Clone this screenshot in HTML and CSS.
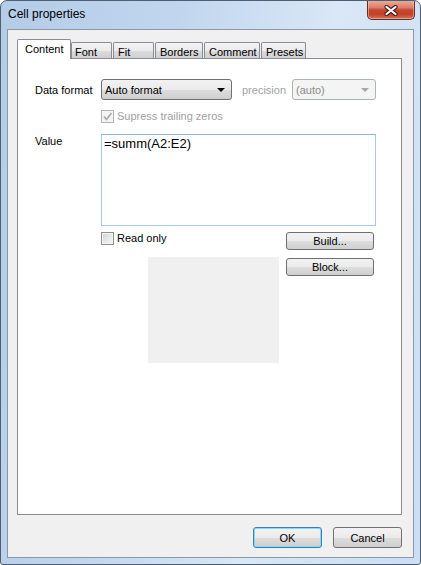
FILE: index.html
```html
<!DOCTYPE html>
<html>
<head>
<meta charset="utf-8">
<title>Cell properties</title>
<link rel="stylesheet" href="styles.css">
</head>
<body>
<div class="window">
  <div class="titlebar">
    <span class="title">Cell properties</span>
    <div class="close">
      <svg width="14" height="11" viewBox="0 0 14 11">
        <path d="M2.5 2 L11.5 9 M11.5 2 L2.5 9" stroke="#4a1c14" stroke-width="4.2" stroke-linecap="round" fill="none"/>
        <path d="M2.5 2 L11.5 9 M11.5 2 L2.5 9" stroke="#ffffff" stroke-width="2.2" stroke-linecap="round" fill="none"/>
      </svg>
    </div>
  </div>
  <div class="client">
    <div class="tabs">
      <div class="tab active w-content">Content</div>
      <div class="tab w-font">Font</div>
      <div class="tab w-fit">Fit</div>
      <div class="tab w-borders">Borders</div>
      <div class="tab w-comment">Comment</div>
      <div class="tab w-presets">Presets</div>
    </div>
    <div class="panel">
      <div class="row r1">
        <span class="lbl">Data format</span>
        <div class="combo">
          <span>Auto format</span>
          <span class="arrow"></span>
        </div>
        <span class="prec">precision</span>
        <div class="combo dis">
          <span>(auto)</span>
          <span class="arrow"></span>
        </div>
      </div>
      <div class="row r2">
        <span class="chk chk-dis">
          <svg width="11" height="11" viewBox="0 0 11 11"><path d="M2 5.5 L4.5 8.5 L9.5 2" stroke="#a9a9a9" stroke-width="1.6" fill="none"/></svg>
        </span>
        <span class="chklbl dimtext">Supress trailing zeros</span>
      </div>
      <div class="row r3">
        <span class="lbl vlbl">Value</span>
        <div class="textbox">=summ(A2:E2)</div>
      </div>
      <div class="row r4">
        <span class="chk"></span>
        <span class="chklbl">Read only</span>
        <div class="btn small">Build...</div>
      </div>
      <div class="row r5">
        <div class="preview"></div>
        <div class="btn small block">Block...</div>
      </div>
    </div>
    <div class="actions">
      <div class="btn big default">OK</div>
      <div class="btn big">Cancel</div>
    </div>
  </div>
</div>
</body>
</html>
```
FILE: styles.css
```css
html, body {
  margin: 0;
  padding: 0;
  background: #ffffff;
}
body {
  font-family: "Liberation Sans", Arial, sans-serif;
  font-size: 11px;
  color: #000;
}
.window {
  width: 421px;
  height: 565px;
  box-sizing: border-box;
  border: 1px solid #4f5f72;
  border-radius: 7px 7px 3px 3px;
  background: linear-gradient(100deg, #b4cce8 0%, #c1d6ee 35%, #d9e7f6 65%, #cbdef2 100%);
  display: flex;
  flex-direction: column;
  overflow: hidden;
}
.titlebar {
  height: 28px;
  flex: none;
  display: flex;
  justify-content: space-between;
  align-items: flex-start;
  padding-left: 7px;
}
.title {
  font-size: 12px;
  line-height: 16px;
  padding-top: 5px;
  color: #000;
}
.close {
  width: 48px;
  height: 20px;
  margin-top: -1px;
  margin-right: 5px;
  box-sizing: border-box;
  border: 1px solid #6b2a20;
  border-top: none;
  border-radius: 0 0 5px 5px;
  background: linear-gradient(#eab2a3 0%, #dc7c69 40%, #c74530 52%, #c0412c 75%, #d4765c 100%);
  box-shadow: inset 0 0 0 1px rgba(255, 220, 210, 0.45);
  display: flex;
  align-items: center;
  justify-content: center;
  padding-top: 1px;
}
.client {
  margin: 0 6px;
  height: 529px;
  box-sizing: border-box;
  border: 1px solid #8d98a5;
  background: #f0f0f0;
  display: flex;
  flex-direction: column;
}
.tabs {
  display: flex;
  align-items: flex-end;
  margin: 9px 0 -1px 9px;
  position: relative;
  z-index: 1;
}
.tab {
  box-sizing: border-box;
  height: 16px;
  margin-bottom: 1px;
  margin-left: 1px;
  border: 1px solid #898c95;
  border-bottom: none;
  border-radius: 2px 2px 0 0;
  padding: 3px 0 0 4px;
  line-height: 13px;
  white-space: nowrap;
  background: linear-gradient(#f3f3f3 0%, #ebebeb 50%, #dddddd 51%, #cfcfcf 100%);
}
.tab.active {
  height: 20px;
  margin-bottom: 0;
  margin-left: 0;
  background: #ffffff;
  padding-left: 7px;
}
.w-content { width: 54px; }
.w-font { width: 41px; margin-left: 0; padding-left: 3px; }
.w-fit { width: 41px; }
.w-borders { width: 48px; }
.w-comment { width: 56px; }
.w-presets { width: 45px; }

.panel {
  margin: 0 11px 0 9px;
  height: 457px;
  flex: none;
  box-sizing: border-box;
  border: 1px solid #898c95;
  background: #ffffff;
  padding: 20px 27px 0 17px;
}
.row {
  display: flex;
}
.r1 {
  align-items: center;
  height: 21px;
}
.lbl {
  width: 66px;
  flex: none;
}
.combo {
  width: 131px;
  height: 21px;
  flex: none;
  box-sizing: border-box;
  border: 1px solid #707070;
  border-radius: 3px;
  background: linear-gradient(#f2f2f2 0%, #ebebeb 50%, #dddddd 51%, #cfcfcf 100%);
  display: flex;
  align-items: center;
  justify-content: space-between;
  padding: 0 6px 0 3px;
}
.arrow {
  width: 0;
  height: 0;
  border-left: 4px solid transparent;
  border-right: 4px solid transparent;
  border-top: 4px solid #000;
}
.prec {
  margin-left: 10px;
  width: 50px;
  flex: none;
  color: #a0a0a0;
}
.combo.dis {
  width: 84px;
  border-color: #adb2b5;
  background: #f4f4f4;
  color: #8a8a8a;
}
.combo.dis .arrow {
  border-top-color: #a8a8a8;
}
.r2 {
  align-items: center;
  height: 13px;
  margin: 10px 0 0 66px;
}
.chk {
  width: 13px;
  height: 13px;
  flex: none;
  box-sizing: border-box;
  border: 1px solid #8e8f8f;
  background: linear-gradient(135deg, #cdd0d4 0%, #e6e7e9 50%, #f7f7f7 100%);
  box-shadow: inset 0 0 0 1px #f4f4f4;
  display: flex;
  align-items: center;
  justify-content: center;
}
.chk-dis {
  border-color: #b4b4b4;
  background: #f4f4f4;
  box-shadow: none;
}
.chklbl {
  margin-left: 3px;
  line-height: 13px;
}
.dimtext {
  color: #a0a0a0;
}
.r3 {
  margin-top: 11px;
}
.vlbl {
  padding-top: 1px;
  line-height: 13px;
}
.textbox {
  width: 275px;
  height: 92px;
  flex: none;
  box-sizing: border-box;
  border: 1px solid #a9c7e6;
  border-top-color: #8fb5dd;
  background: #fff;
  font-size: 13px;
  line-height: 16px;
  padding: 1px 2px;
}
.r4 {
  margin-top: 6px;
  padding-left: 66px;
  align-items: flex-start;
}
.btn {
  box-sizing: border-box;
  border: 1px solid #707070;
  border-radius: 3px;
  background: linear-gradient(#f2f2f2 0%, #ebebeb 50%, #dddddd 51%, #cfcfcf 100%);
  display: flex;
  align-items: center;
  justify-content: center;
  flex: none;
}
.small {
  width: 88px;
  height: 18px;
  margin-left: auto;
}
.r5 {
  margin-top: 7px;
  align-items: flex-start;
}
.preview {
  width: 131px;
  height: 106px;
  margin-left: 113px;
  background: #f0f0f0;
  flex: none;
}
.block {
  margin-top: 1px;
}
.actions {
  display: flex;
  justify-content: flex-end;
  gap: 11px;
  margin-top: 12px;
  padding-right: 11px;
}
.big {
  width: 69px;
  height: 21px;
}
.default {
  border-color: #3c7fb1;
  box-shadow: inset 0 0 0 1px #7fdcff;
}
```
